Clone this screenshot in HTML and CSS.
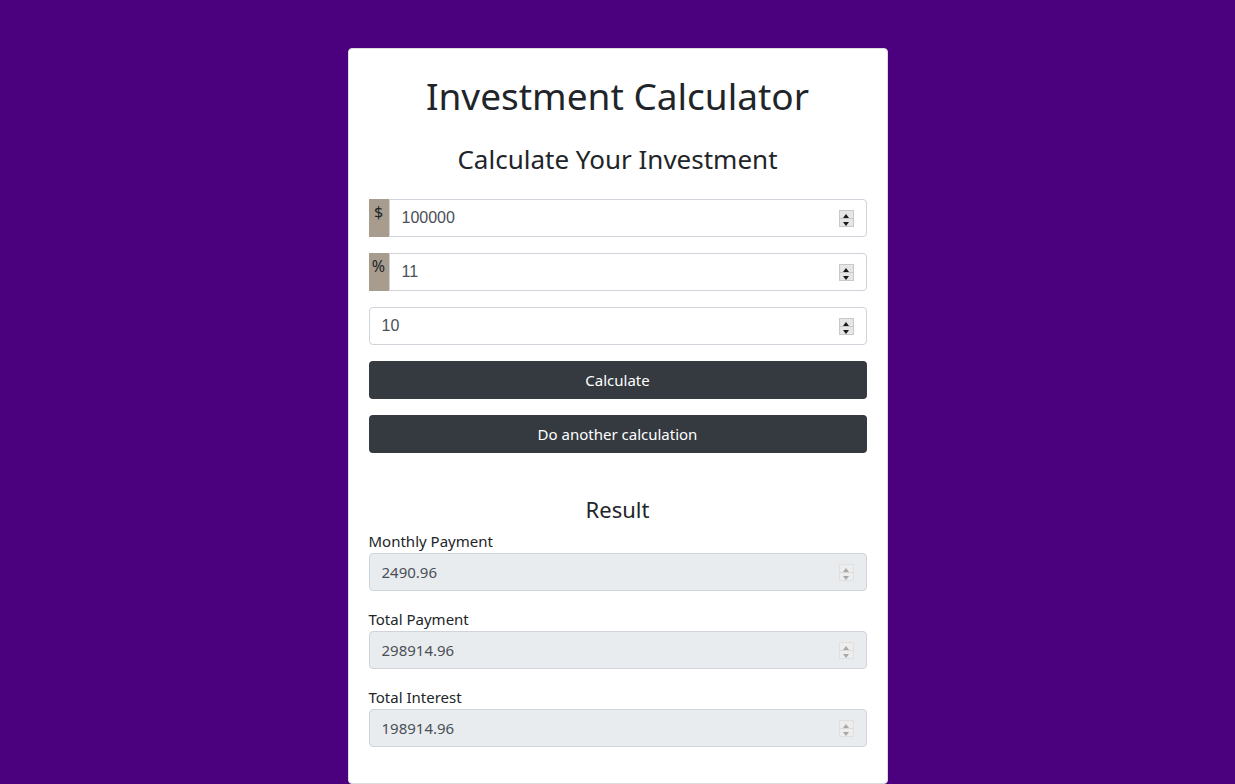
FILE: index.html
```html
<!DOCTYPE html>
<html lang="en">
<head>
<meta charset="utf-8">
<title>Investment Calculator</title>
<link rel="stylesheet" href="styles.css">
</head>
<body>
<main class="page">
  <section class="card">
    <h1 class="title">Investment Calculator</h1>
    <h3 class="subtitle">Calculate Your Investment</h3>
    <form class="calc">
      <div class="field">
        <span class="prepend">$</span>
        <input class="input" type="text" value="100000">
        <span class="spin"><span class="up"></span><span class="down"></span></span>
      </div>
      <div class="field">
        <span class="prepend">%</span>
        <input class="input" type="text" value="11">
        <span class="spin"><span class="up"></span><span class="down"></span></span>
      </div>
      <div class="field">
        <input class="input" type="text" value="10">
        <span class="spin"><span class="up"></span><span class="down"></span></span>
      </div>
      <button type="button" class="btn">Calculate</button>
      <button type="button" class="btn">Do another calculation</button>
    </form>
    <div class="results">
      <h4 class="result-title">Result</h4>
      <div class="group">
        <label class="label">Monthly Payment</label>
        <div class="field">
          <input class="input out" type="text" value="2490.96" disabled>
          <span class="spin dis"><span class="up"></span><span class="down"></span></span>
        </div>
      </div>
      <div class="group">
        <label class="label">Total Payment</label>
        <div class="field">
          <input class="input out" type="text" value="298914.96" disabled>
          <span class="spin dis"><span class="up"></span><span class="down"></span></span>
        </div>
      </div>
      <div class="group">
        <label class="label">Total Interest</label>
        <div class="field">
          <input class="input out" type="text" value="198914.96" disabled>
          <span class="spin dis"><span class="up"></span><span class="down"></span></span>
        </div>
      </div>
    </div>
  </section>
</main>
</body>
</html>
```
FILE: styles.css
```css
* { box-sizing: border-box; }
html, body { margin: 0; padding: 0; }
body {
  background: #4b007d;
  font-family: "Noto Sans", "Open Sans", sans-serif;
  color: #212529;
  height: 784px;
  overflow: hidden;
}
.page {
  display: flex;
  justify-content: center;
  padding-top: 48px;
}
.card {
  width: 540px;
  background: #fff;
  border: 1px solid #dcdcdc;
  border-radius: 4px;
  padding: 20px 20px 36px;
}
.title {
  margin: 0;
  font-weight: 400;
  font-size: 37px;
  line-height: 54px;
  text-align: center;
  color: #212529;
}
.subtitle {
  margin: 18px 0 0;
  font-weight: 400;
  font-size: 26px;
  line-height: 36px;
  text-align: center;
}
.calc {
  display: flex;
  flex-direction: column;
  gap: 16px;
  margin-top: 22px;
}
.field {
  position: relative;
  display: flex;
  height: 38px;
}
.prepend {
  width: 20px;
  flex: none;
  background: #a89c8f;
  color: #212529;
  font-size: 16px;
  line-height: 26px;
  text-align: center;
}
.input {
  flex: 1;
  min-width: 0;
  height: 38px;
  border: 1px solid #ced4da;
  border-radius: 4px;
  padding: 0 12px;
  font-family: "Liberation Sans", Arial, sans-serif;
  font-size: 16px;
  color: #495057;
  background: #fff;
  outline: none;
}
.prepend + .input {
  border-top-left-radius: 0;
  border-bottom-left-radius: 0;
}
.input.out {
  background: #e9ecef;
  font-family: "Noto Sans", "Open Sans", sans-serif;
  font-size: 15px;
  opacity: 1;
  -webkit-text-fill-color: #495057;
}
.spin {
  position: absolute;
  right: 13px;
  top: 11px;
  width: 15px;
  height: 17px;
  display: flex;
  flex-direction: column;
  border: 1px solid #c9c9c9;
  background: #e6e6e6;
}
.spin .up, .spin .down {
  flex: 1;
  position: relative;
}
.spin .up { border-bottom: 1px solid #c9c9c9; }
.spin .up::after, .spin .down::after {
  content: "";
  position: absolute;
  left: 3px;
  width: 0;
  height: 0;
  border-left: 3.5px solid transparent;
  border-right: 3.5px solid transparent;
}
.spin .up::after { top: 3px; border-bottom: 4px solid #1a1a1a; }
.spin .down::after { top: 3px; border-top: 4px solid #1a1a1a; }
.spin.dis { border-color: #e0e0e0; background: #ededed; }
.spin.dis .up { border-bottom-color: #dadada; }
.spin.dis .up::after { border-bottom-color: #a8a8a8; }
.spin.dis .down::after { border-top-color: #a8a8a8; }
.btn {
  height: 38px;
  border: none;
  border-radius: 4px;
  background: #343a40;
  color: #fff;
  font-family: "Noto Sans", "Open Sans", sans-serif;
  font-size: 15px;
  padding: 0;
  cursor: pointer;
}
.results {
  margin-top: 41px;
}
.result-title {
  margin: 0 0 5px;
  font-weight: 400;
  font-size: 22px;
  line-height: 30px;
  text-align: center;
}
.group { display: flex; flex-direction: column; }
.group + .group { margin-top: 16px; }
.label {
  font-size: 15px;
  line-height: 24px;
}
```
